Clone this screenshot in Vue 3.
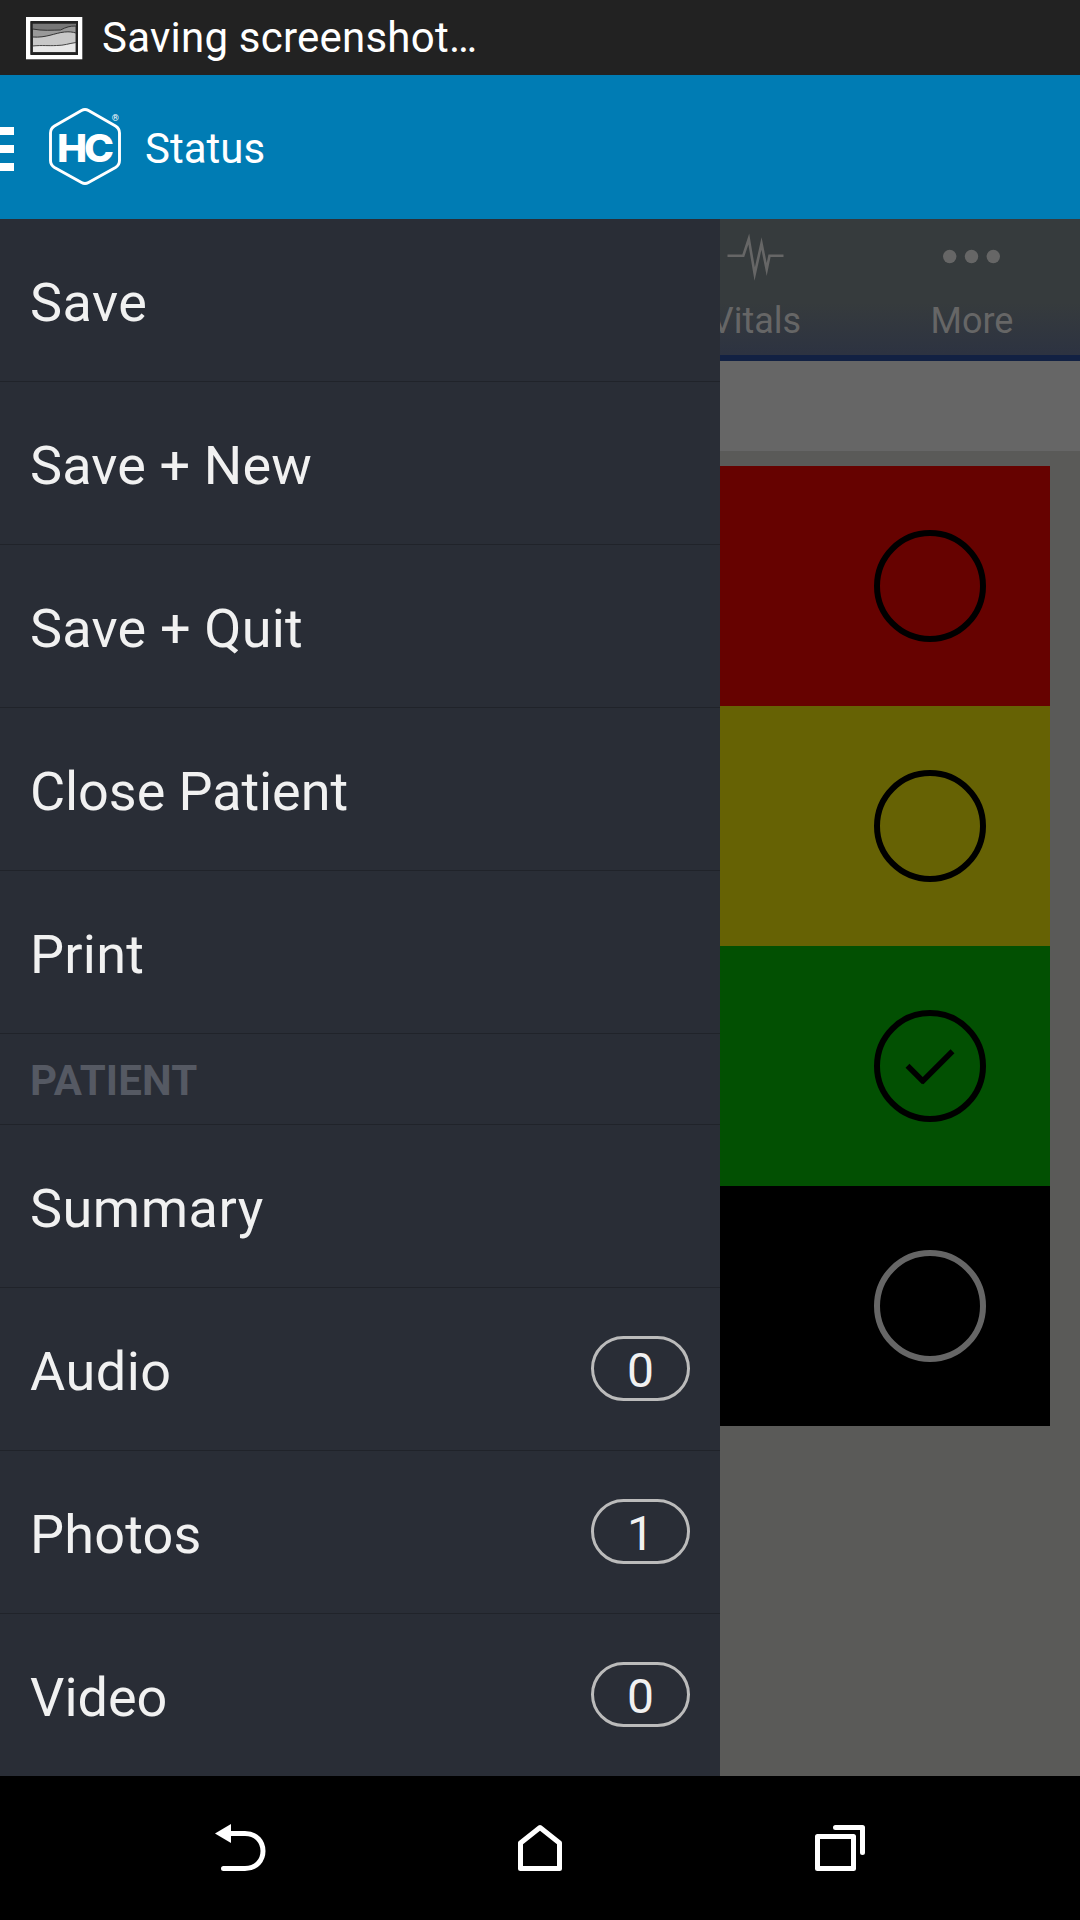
<script setup>
// `track` is the letter spacing of a label in pixels
const actions = [
  { label: 'Save', track: 0.45 },
  { label: 'Save + New', track: 0.12 },
  { label: 'Save + Quit', track: 0.2 },
  { label: 'Close Patient', track: -0.08 },
  { label: 'Print', track: 0.25 }
]
const patient = [
  { label: 'Summary', track: 0.5 },
  { label: 'Audio', track: 0.5, count: 0 },
  { label: 'Photos', track: 0.2, count: 1 },
  { label: 'Video', track: 0, count: 0 }
]
const levels = [
  { name: 'red' },
  { name: 'yellow' },
  { name: 'green', checked: true },
  { name: 'black' }
]
</script>

<template>
  <div class="screen">
    <header class="status-bar">
      <svg class="shot-icon" width="57" height="43" viewBox="0 0 57 43">
        <rect width="56.300" height="42.300" fill="#fff" />
        <rect x="4.500" y="4" width="47.500" height="34" fill="#222" />
        <rect x="6.500" y="6.500" width="43.500" height="29" fill="#777" />
        <path d="M6.500 12c10 2 20 1 28 1 6-3 9-4 15.500-4v26.500h-43.500z" fill="#999" stroke="#333" />
        <path d="M6.500 20c14 1 22-4 32-5 5-.5 8 0 11.500 1v19.500h-43.500z" fill="#c8c8c8" stroke="#333" />
        <path d="M6.500 29c10-1 16 0 24-.5 8 0 12-2 19.500-3v10h-43.500z" fill="#e8e8e8" stroke="#444" />
        <rect x="5.500" y="5.500" width="45.500" height="31" fill="none" stroke="#222" stroke-width="2" />
      </svg>
      <span class="status-text">Saving screenshot…</span>
    </header>

    <div class="action-bar">
      <div class="burger"><i></i><i></i><i></i></div>
      <svg class="logo" width="80" height="84" viewBox="45 104 80 84">
        <path
          d="M81.500 110.500Q85 108.500 88.500 110.500L115.500 126Q119.500 128.500 119.500 133V160.500Q119.500 165 115.500 167.500L88.500 182.500Q85 184.500 81.500 182.500L54.500 167.500Q50.500 165 50.500 160.500V133Q50.500 128.500 54.500 126Z"
          fill="none" stroke="#fff" stroke-width="2.900" />
        <circle cx="115.300" cy="117.300" r="4.800" fill="#007cb4" />
        <text class="mark" x="84" y="161.700" text-anchor="middle" textLength="54" lengthAdjust="spacingAndGlyphs">HC</text>
        <text class="reg" x="115.300" y="120.500" text-anchor="middle">®</text>
      </svg>
      <h1 class="title">Status</h1>
    </div>

    <main class="body">
      <nav class="drawer">
        <div v-for="a in actions" :key="a.label" class="item">
          <span class="label" :style="{ letterSpacing: a.track + 'px' }">{{ a.label }}</span>
        </div>
        <div class="section"><span>PATIENT</span></div>
        <div v-for="p in patient" :key="p.label" class="item">
          <span class="label" :style="{ letterSpacing: p.track + 'px' }">{{ p.label }}</span>
          <span v-if="p.count !== undefined" class="badge"><span>{{ p.count }}</span></span>
        </div>
      </nav>

      <section class="content">
        <div class="tabs">
          <div class="tab">
            <svg width="64" height="60" viewBox="724 226 64 60">
              <path d="M727.500 255.700H743.300L748.800 239L754.700 274L761.500 243.500L766.700 269.500L769.500 255.700H783.500"
                fill="none" stroke="#666" stroke-width="2.600" stroke-miterlimit="12" />
            </svg>
            <span>Vitals</span>
          </div>
          <div class="tab">
            <svg width="64" height="60" viewBox="940 226 64 60" fill="#666">
              <circle cx="949.700" cy="256.500" r="6.700" />
              <circle cx="971.500" cy="256.500" r="6.700" />
              <circle cx="993.300" cy="256.500" r="6.700" />
            </svg>
            <span>More</span>
          </div>
        </div>
        <div class="strip"></div>
        <div class="levels">
          <div v-for="l in levels" :key="l.name" class="level" :class="l.name">
            <svg width="112" height="112" viewBox="0 0 112 112" fill="none" stroke="currentColor">
              <circle cx="56" cy="56" r="53" stroke-width="6" />
              <path v-if="l.checked" d="M33.500 55.700L50 72.200M47.500 72.200L78.500 41.200" stroke-width="5.500" />
            </svg>
          </div>
        </div>
      </section>
    </main>

    <footer class="nav-bar">
      <div class="key">
        <svg width="60" height="60" viewBox="0 0 60 60">
          <path d="M5 15.500L21 6V25Z" fill="#fff" />
          <path d="M18 15.500H35C59 15.500 59 50.500 35 50.500H13.500" fill="none" stroke="#fff" stroke-width="5" stroke-linecap="round" />
        </svg>
      </div>
      <div class="key">
        <svg width="60" height="60" viewBox="0 0 60 60">
          <path d="M10.500 50.500V25L30 9.500L49.500 25V50.500Z" fill="none" stroke="#fff" stroke-width="5" stroke-linejoin="round" />
        </svg>
      </div>
      <div class="key">
        <svg width="60" height="60" viewBox="0 0 60 60" fill="none" stroke="#fff" stroke-width="5" stroke-linejoin="round" stroke-linecap="round">
          <path d="M7.500 18.500H43.500V50.500H7.500Z" />
          <path d="M25.500 9.500H52.500V34.500" />
        </svg>
      </div>
    </footer>
  </div>
</template>

<style>
body { margin: 0; background: #000; }
</style>

<style scoped>
.screen {
  width: 1080px;
  height: 1920px;
  display: flex;
  flex-direction: column;
  overflow: hidden;
  font-family: Roboto, "Liberation Sans", sans-serif;
  color: #fff;
}
.status-bar {
  height: 75px;
  flex: none;
  box-sizing: border-box;
  padding-left: 26px;
  background: #222;
  display: flex;
  align-items: center;
}
.shot-icon { margin-top: 1px; }
.status-text { margin-left: 19px; font-size: 42px; line-height: 75px; letter-spacing: 0.23px; white-space: nowrap; }
.action-bar {
  height: 144px;
  flex: none;
  background: #007cb4;
  display: flex;
  align-items: center;
}
.burger { width: 14px; display: flex; flex-direction: column; gap: 10px; padding-top: 4px; }
.burger i { height: 8px; background: #fff; }
.logo { margin-left: 31px; margin-top: -2px; }
.mark { font: 800 38.500px Inter, sans-serif; letter-spacing: -3px; fill: #fff; }
.reg { font: 9px Roboto, sans-serif; fill: #fff; }
.title { margin: 0 0 0 20px; font-size: 42px; font-weight: 400; line-height: 50px; padding-top: 3px; }
.body { flex: 1; min-height: 0; display: flex; overflow: hidden; }
.drawer { width: 720px; flex: none; background: #292d36; color: #f1f1f1; }
.item {
  height: 163px;
  box-sizing: border-box;
  border-bottom: 1px solid #20232a;
  padding: 0 30px;
  display: flex;
  align-items: center;
  justify-content: space-between;
}
.label { font-size: 54px; line-height: 64px; padding-top: 5px; white-space: nowrap; }
.section {
  height: 91px;
  box-sizing: border-box;
  border-bottom: 1px solid #20232a;
  padding: 3px 30px 0;
  display: flex;
  align-items: center;
  font-size: 42px;
  letter-spacing: 0.15px;
  font-weight: 700;
  color: #555963;
}
.badge {
  width: 99px;
  height: 65px;
  margin-bottom: 2px;
  box-sizing: border-box;
  border: 3px solid #bbb;
  border-radius: 33px;
  font-size: 48px;
  line-height: 60px;
  text-align: center;
}
.badge span { display: block; padding-top: 2px; }
.content { width: 360px; flex: none; background: #5a5a58; overflow: hidden; }
.tabs {
  height: 142px;
  box-sizing: border-box;
  border-bottom: 6px solid #122143;
  background: linear-gradient(#363b3d 0, #363b3d 84px, #2d3341 134px);
  display: flex;
  justify-content: flex-end;
}
.tab {
  width: 216px;
  flex: none;
  display: flex;
  flex-direction: column;
  align-items: center;
  padding-top: 7px;
  font-size: 36px;
  line-height: 42px;
  color: #666;
}
.tab span { margin-top: 14px; }
.strip { height: 90px; background: #666; }
.levels { padding: 15px 30px 0 0; }
.level {
  height: 240px;
  box-sizing: border-box;
  padding-right: 64px;
  display: flex;
  align-items: center;
  justify-content: flex-end;
  color: #000;
}
.red { background: #660200; }
.yellow { background: #666204; }
.green { background: #025002; }
.black { background: #000; color: #666; }
.nav-bar { height: 144px; flex: none; background: #000; display: flex; justify-content: center; }
.key { width: 300px; display: flex; align-items: center; justify-content: center; }
</style>
